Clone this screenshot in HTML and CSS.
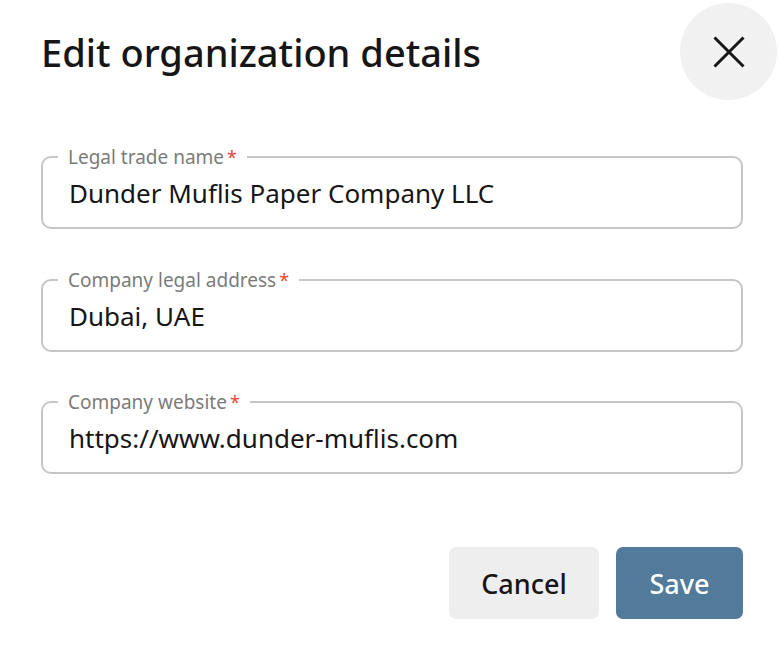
FILE: index.html
```html
<!DOCTYPE html>
<html>
<head>
<meta charset="utf-8">
<link rel="stylesheet" href="styles.css">
</head>
<body>
<div class="dialog">
  <header class="head">
    <h1 class="title">Edit organization details</h1>
    <button class="close" aria-label="Close">
      <svg width="32" height="32" viewBox="0 0 32 32"><path d="M1.5 1.5 L30.5 30.5 M30.5 1.5 L1.5 30.5" stroke="#161616" stroke-width="3" fill="none"/></svg>
    </button>
  </header>
  <form class="form">
    <fieldset class="field">
      <legend class="label">Legal trade name<span class="req">*</span></legend>
      <div class="value">Dunder Muflis Paper Company LLC</div>
    </fieldset>
    <fieldset class="field">
      <legend class="label">Company legal address<span class="req">*</span></legend>
      <div class="value">Dubai, UAE</div>
    </fieldset>
    <fieldset class="field">
      <legend class="label">Company website<span class="req">*</span></legend>
      <div class="value">https://www.dunder-muflis.com</div>
    </fieldset>
  </form>
  <footer class="actions">
    <button class="btn btn-cancel">Cancel</button>
    <button class="btn btn-save">Save</button>
  </footer>
</div>
</body>
</html>
```
FILE: styles.css
```css
html, body { margin: 0; padding: 0; background: #fff; }
body { font-family: "Noto Sans", "Open Sans", sans-serif; color: #161616; }
.dialog { width: 778px; height: 656px; box-sizing: border-box; padding: 0 0 0 41px; overflow: hidden; }
.head { display: flex; justify-content: space-between; align-items: flex-start; height: 110px; }
.title { margin: 0; padding-top: 27px; font-size: 38px; font-weight: 500; line-height: 50px; letter-spacing: 0; }
.close { width: 97px; height: 97px; border-radius: 50%; border: none; background: #f1f1f1; margin-top: 3px; margin-right: 1px; display: flex; align-items: center; justify-content: center; padding: 0; }
.form { display: flex; flex-direction: column; gap: 39.5px; margin-top: 36px; width: 702px; }
.field { margin: 0; border: 2px solid #c6c6c6; border-radius: 10px; padding: 0 24px 16px 15px; }
.label { padding: 0 10px; font-size: 19px; color: #7b7b7b; line-height: 22px; }
.req { color: #e5483b; margin-left: 3px; font-size: 18px; }
.value { font-size: 26px; line-height: 36px; padding-top: 7px; padding-left: 11px; color: #161616; }
.actions { display: flex; justify-content: flex-end; gap: 17px; margin-top: 73px; width: 702px; }
.btn { height: 72px; border: none; border-radius: 7px; font-family: inherit; font-size: 27px; font-weight: 500; padding: 0; }
.btn-cancel { width: 150px; background: #eeeeee; color: #161616; }
.btn-save { width: 127px; background: #527a9b; color: #fff; }
```
